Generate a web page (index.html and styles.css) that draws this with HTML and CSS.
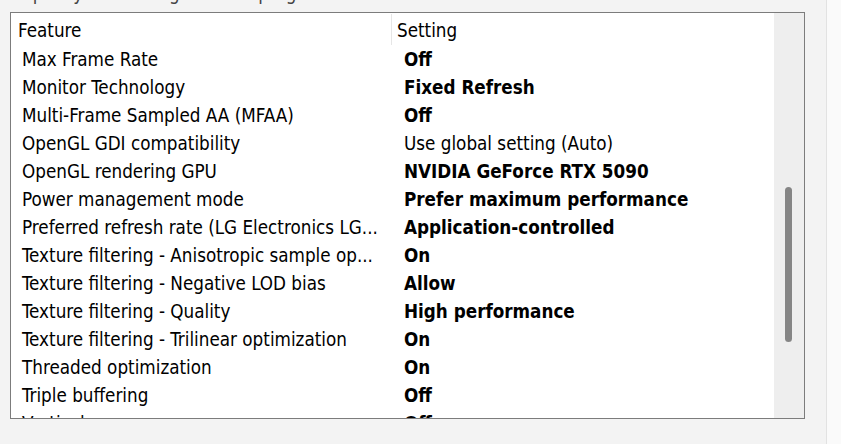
FILE: index.html
```html
<!DOCTYPE html>
<html>
<head>
<meta charset="utf-8">
<link rel="stylesheet" href="styles.css">
</head>
<body>
<div class="main">
  <div class="caption">Specify the settings for this program:</div>
  <div class="listbox">
    <div class="list">
      <div class="header">
        <div class="hcell hfeature">Feature</div>
        <div class="hcell hsetting">Setting</div>
      </div>
      <div class="rows">
        <div class="row"><span class="feat">Max Frame Rate</span><span class="val b">Off</span></div>
        <div class="row"><span class="feat">Monitor Technology</span><span class="val b">Fixed Refresh</span></div>
        <div class="row"><span class="feat">Multi-Frame Sampled AA (MFAA)</span><span class="val b">Off</span></div>
        <div class="row"><span class="feat">OpenGL GDI compatibility</span><span class="val">Use global setting (Auto)</span></div>
        <div class="row"><span class="feat">OpenGL rendering GPU</span><span class="val b">NVIDIA GeForce RTX 5090</span></div>
        <div class="row"><span class="feat">Power management mode</span><span class="val b">Prefer maximum performance</span></div>
        <div class="row"><span class="feat">Preferred refresh rate (LG Electronics LG...</span><span class="val b">Application-controlled</span></div>
        <div class="row"><span class="feat">Texture filtering - Anisotropic sample op...</span><span class="val b">On</span></div>
        <div class="row"><span class="feat">Texture filtering - Negative LOD bias</span><span class="val b">Allow</span></div>
        <div class="row"><span class="feat">Texture filtering - Quality</span><span class="val b">High performance</span></div>
        <div class="row"><span class="feat">Texture filtering - Trilinear optimization</span><span class="val b">On</span></div>
        <div class="row"><span class="feat">Threaded optimization</span><span class="val b">On</span></div>
        <div class="row"><span class="feat">Triple buffering</span><span class="val b">Off</span></div>
        <div class="row"><span class="feat">Vertical sync</span><span class="val b">Off</span></div>
      </div>
    </div>
    <div class="scrollbar"><div class="thumb"></div></div>
  </div>
</div>
<div class="side"></div>
</body>
</html>
```
FILE: styles.css
```css
html, body {
  margin: 0;
  padding: 0;
  height: 100%;
}
body {
  display: flex;
  overflow: hidden;
  font-family: "DejaVu Sans Condensed", "DejaVu Sans", sans-serif;
  font-stretch: semi-condensed;
  font-size: 18.7px;
  color: #000;
}
.main {
  flex: 0 0 826px;
  background: #f3f3f3;
  border-right: 1px solid #e2e2e2;
  overflow: hidden;
}
.side {
  flex: 1;
  background: #fafafa;
}
.caption {
  margin-top: -16px;
  height: 28px;
  line-height: 20px;
  padding-left: 22px;
  color: #444;
  white-space: nowrap;
}
.listbox {
  margin-left: 10px;
  width: 793px;
  height: 405px;
  border: 1px solid #7c7c7c;
  background: #fff;
  display: flex;
  overflow: hidden;
}
.list {
  flex: 0 0 763px;
  overflow: hidden;
}
.header {
  display: flex;
  height: 33px;
}
.hcell {
  height: 31px;
  margin: 1px 0;
  padding-top: 3px;
  line-height: 28px;
  box-sizing: border-box;
  white-space: nowrap;
}
.hfeature {
  flex: 0 0 381px;
  padding-left: 7px;
  border-right: 1px solid #e6e6e6;
}
.hsetting {
  flex: 1;
  padding-left: 5px;
}
.row {
  display: flex;
  height: 28px;
  line-height: 28px;
  white-space: nowrap;
}
.feat {
  flex: 0 0 382px;
  box-sizing: border-box;
  padding-left: 11px;
  overflow: hidden;
}
.val {
  flex: 1;
  padding-left: 11px;
}
.b {
  font-weight: bold;
}
.scrollbar {
  flex: 0 0 30px;
  background: #eeeeee;
  position: relative;
}
.thumb {
  position: absolute;
  left: 11px;
  top: 174px;
  width: 7px;
  height: 155px;
  border-radius: 4px;
  background: #858585;
}
```
